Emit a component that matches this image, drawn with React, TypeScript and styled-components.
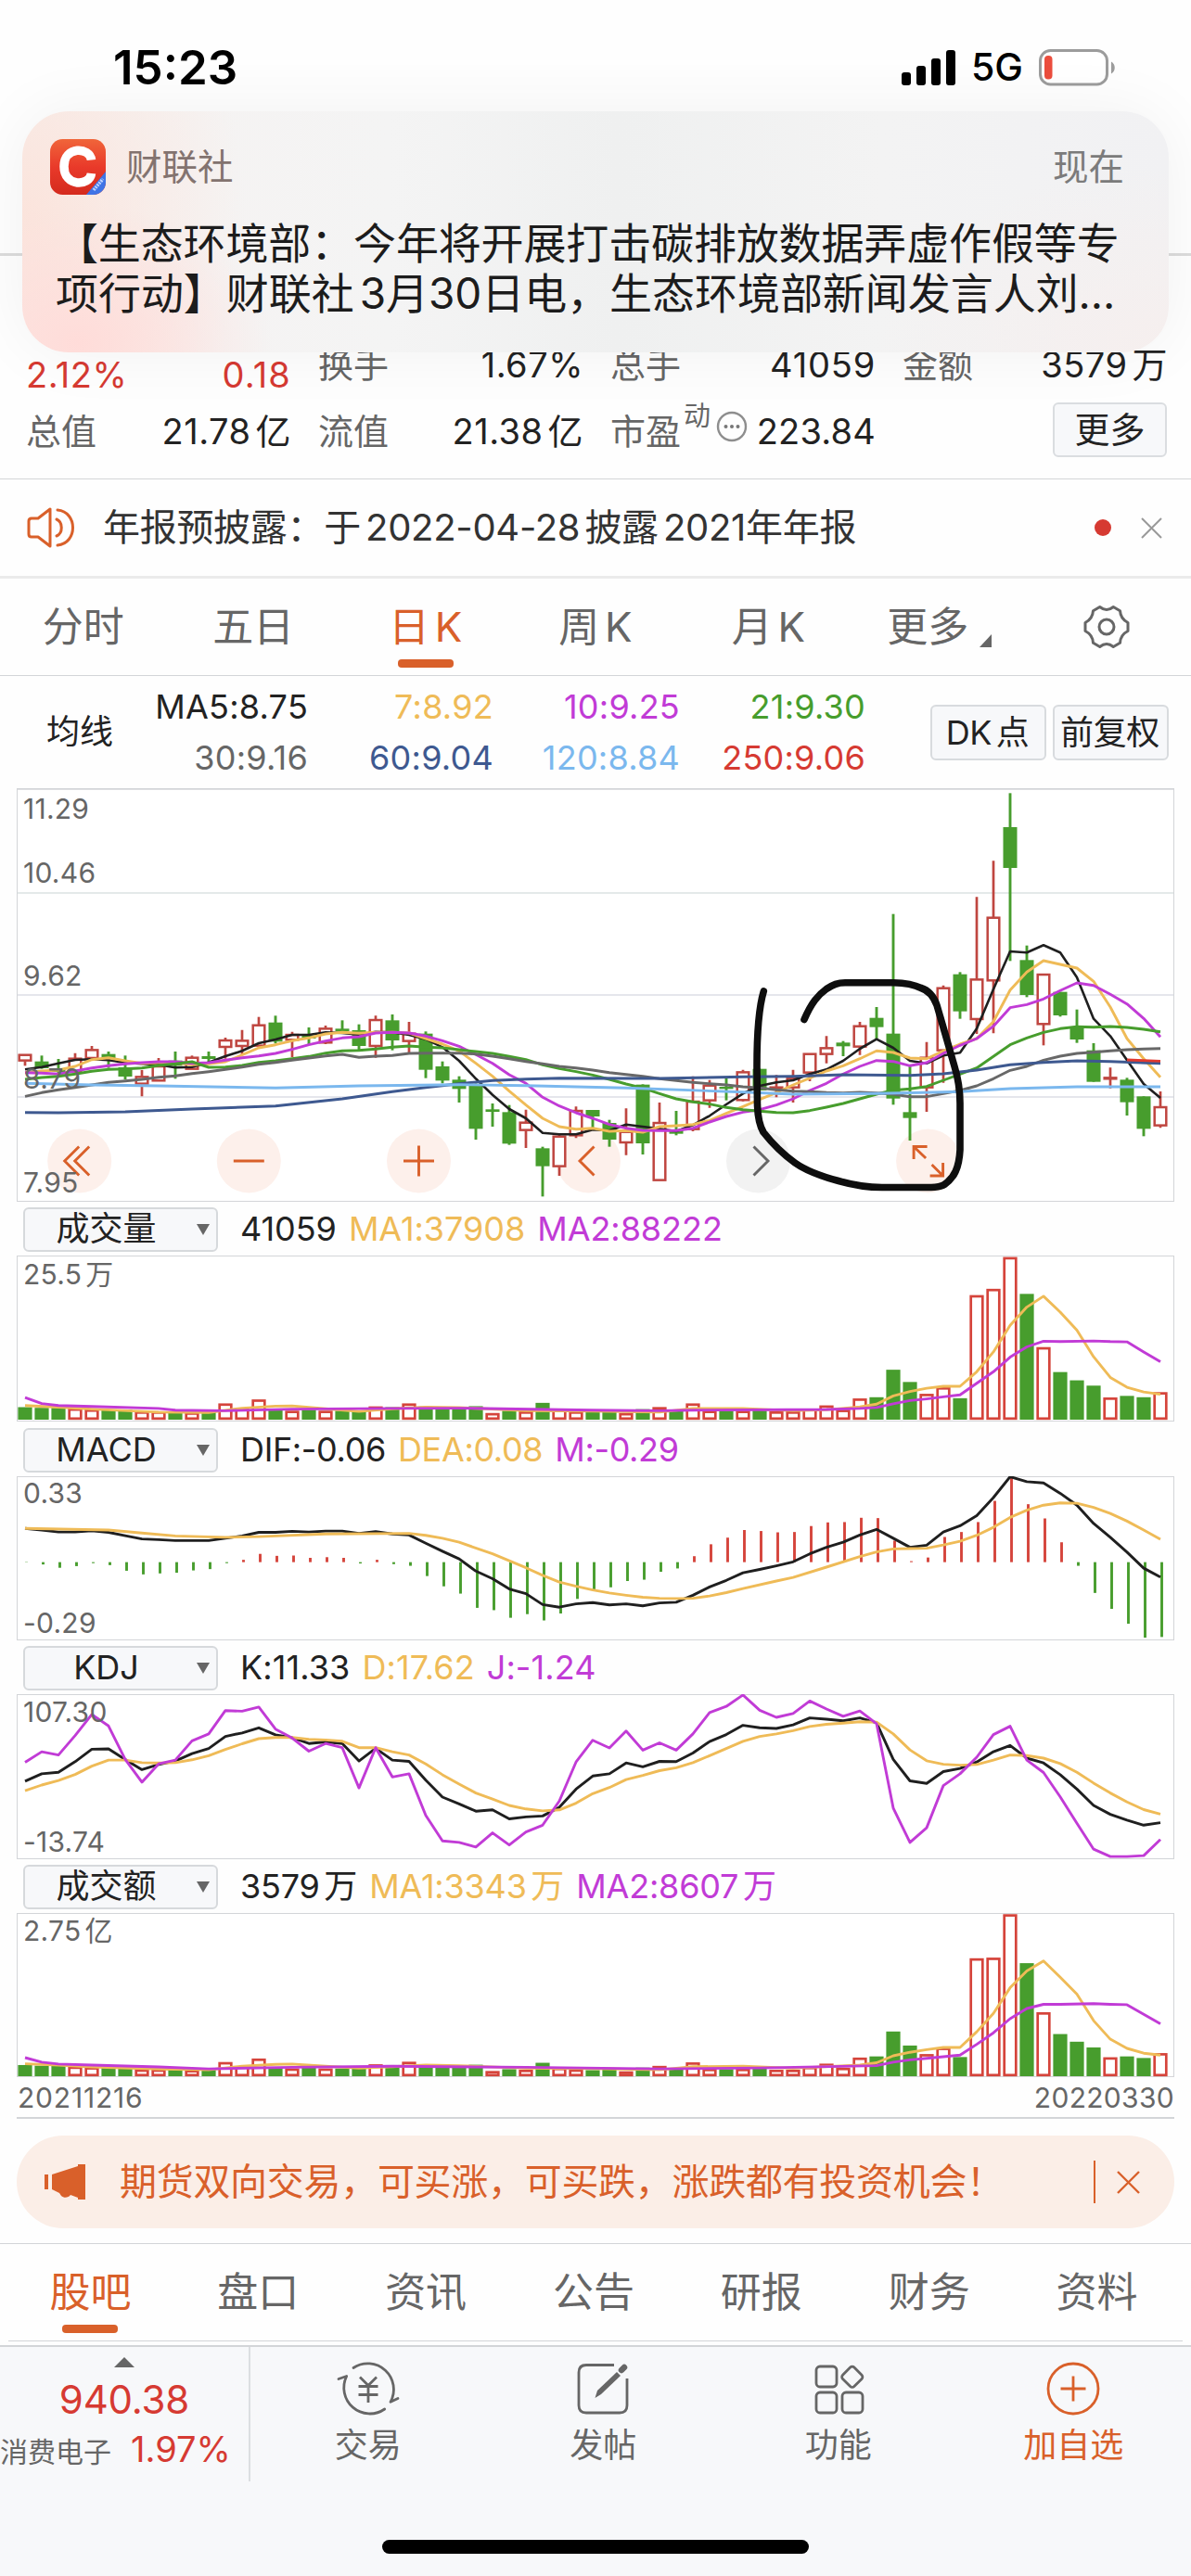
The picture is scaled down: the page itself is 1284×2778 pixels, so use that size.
import React from "react";
import styled, { createGlobalStyle } from "styled-components";

const C = {
  ink: "#222222",
  text: "#333333",
  gray: "#666666",
  line: "#d3d5d8",
  orange: "#d9602a",
  red: "#d63a32",
  candle: "#bf4640",
  bar: "#d5443b",
  green: "#479d2d",
  yellow: "#efbb57",
  magenta: "#c13bd6",
  navy: "#3e5990",
  sky: "#7bb8ee",
  panel: "#f7f8fa",
};

const Global = createGlobalStyle`
  * { box-sizing: border-box; }
  html, body { margin: 0; padding: 0; background: #fff; }
  body {
    font-family: Inter, "Noto Sans CJK SC", "Noto Sans", sans-serif;
    line-height: 1.2;
    color: ${C.text};
  }
  svg { display: block; }
`;

const Page = styled.main`
  position: relative;
  width: 1284px;
  height: 2778px;
  overflow: hidden;
  display: flex;
  flex-direction: column;
  background: #fefefe;
`;

/* Latin runs next to Han characters get a small gap on each side. */
const Gap = styled.span`
  display: inline-block;
  width: 0.13em;
`;

function Mixed({ children }: { children: string }) {
  const parts = children.split(/(?<=[\u4e00-\u9fff])(?=[0-9A-Za-z])|(?<=[0-9A-Za-z])(?=[\u4e00-\u9fff])/);
  return (
    <>
      {parts.map((p, i) => (
        <React.Fragment key={i}>
          {i > 0 && <Gap />}
          {p}
        </React.Fragment>
      ))}
    </>
  );
}

/* ---------- status bar ---------- */
const StatusBar = styled.header`
  height: 120px;
  padding: 25px 82px 0 122px;
  display: flex;
  align-items: center;
  justify-content: space-between;
  color: #000;
`;
const Clock = styled.div`
  font-size: 51px;
  font-weight: 600;
  letter-spacing: 0;
`;
const StatusRight = styled.div`
  display: flex;
  align-items: center;
`;
const Carrier = styled.span`
  font-size: 41px;
  font-weight: 500;
  margin: 0 17px 0 16px;
`;

/* ---------- push notification ---------- */
const Push = styled.section`
  position: absolute;
  left: 24px;
  top: 120px;
  width: 1236px;
  height: 260px;
  border-radius: 50px;
  padding: 30px 48px 0 30px;
  background:
    radial-gradient(ellipse 210px 150px at 60px 250px, #ffdcd9 0%, rgba(255, 220, 217, 0) 100%),
    radial-gradient(ellipse 240px 330px at 0px 110px, #fbe4dc 0%, rgba(251, 228, 220, 0) 100%),
    radial-gradient(ellipse 320px 200px at 1236px 260px, #f6efee 0%, rgba(246, 239, 238, 0) 100%),
    linear-gradient(90deg, #f6f2f1 0%, #f4f4f4 32%, #eff0f0 52%, #f3f3f3 75%, #f1f1f3 100%);
  box-shadow: 0 0 70px rgba(0, 0, 0, 0.055);
`;
const PushHead = styled.div`
  height: 60px;
  display: flex;
  align-items: center;
  font-size: 38.5px;
`;
const AppName = styled.span`
  flex: 1;
  margin-left: 22px;
  color: #83736f;
`;
const When = styled.span`
  color: #7b7b7b;
`;
const PushBody = styled.p`
  margin: 25px 0 0 6px;
  font-size: 46px;
  line-height: 54px;
  color: #1c1c1c;
  white-space: nowrap;
`;
const PushLine = styled.span<{ $ls: number }>`
  display: block;
  letter-spacing: ${(p) => p.$ls}px;
`;

/* ---------- quote ---------- */
const TitleArea = styled.div`
  height: 156px;
  border-bottom: 3px solid #dcdcdc;
`;
const Quote = styled.section`
  height: 241px;
  border-bottom: 1px solid ${C.line};
  padding: 82px 26px 0 28px;
  display: grid;
  grid-template-columns: repeat(4, 285px);
  grid-auto-rows: 72px;
  column-gap: 30px;
  font-size: 38px;
`;
const Cell = styled.div<{ $drop?: number }>`
  display: flex;
  align-items: center;
  justify-content: space-between;
  white-space: nowrap;
  padding-top: ${(p) => p.$drop ?? 0}px;
`;
const Label = styled.span`
  color: ${C.gray};
`;
const Value = styled.span<{ $c?: string; $ls?: number }>`
  color: ${(p) => p.$c ?? C.ink};
  letter-spacing: ${(p) => p.$ls ?? 0.5}px;
  margin-right: -1px;
`;
const Pe = styled.span`
  display: flex;
  align-items: center;
  color: ${C.gray};
  svg { margin-top: -13px; }
`;
const Sup = styled.sup`
  font-size: 29px;
  line-height: 30px;
  margin: -34px 6px 0 3px;
`;
const MoreButton = styled.button`
  width: 123px;
  height: 59px;
  margin: -6px 0 0 auto;
  padding: 0;
  border: 2px solid #dadde0;
  border-radius: 6px;
  background: ${C.panel};
  font: inherit;
  line-height: 54px;
  color: ${C.ink};
`;

/* ---------- announcement ---------- */
const Notice = styled.section`
  height: 107px;
  border-bottom: 3px solid #ebebeb;
  padding: 0 31px 0 29px;
  display: flex;
  align-items: center;
  font-size: 40px;
`;
const NoticeText = styled.span`
  flex: 1;
  margin-left: 29px;
  letter-spacing: -0.3px;
`;
const Dot = styled.i`
  width: 18px;
  height: 18px;
  border-radius: 50%;
  background: ${C.red};
  margin-right: 32px;
`;

/* ---------- tabs ---------- */
const Tabs = styled.nav<{ $h: number; $pad?: string }>`
  height: ${(p) => p.$h}px;
  display: grid;
  grid-template-columns: repeat(7, 1fr);
  padding: ${(p) => p.$pad ?? "0"};
  font-size: 44px;
`;
const Tab = styled.a<{ $on?: boolean; $shift?: number }>`
  position: relative;
  display: flex;
  align-items: center;
  justify-content: center;
  color: ${(p) => (p.$on ? C.orange : C.gray)};
  transform: translateX(${(p) => p.$shift ?? 0}px);
  &::after {
    content: "";
    display: ${(p) => (p.$on ? "block" : "none")};
    position: absolute;
    left: 50%;
    margin-left: -30px;
    bottom: 8px;
    width: 60px;
    height: 9px;
    border-radius: 4px;
    background: ${C.orange};
  }
`;
const Corner = styled.svg`
  margin: 30px 0 0 12px;
`;
const Rule = styled.div<{ $w?: number; $inset?: number; $gap?: number }>`
  flex: none;
  height: ${(p) => p.$w ?? 1}px;
  margin: 0 ${(p) => p.$inset ?? 0}px ${(p) => p.$gap ?? 0}px;
  background: ${C.line};
`;

/* ---------- moving averages ---------- */
const MaBar = styled.section`
  height: 121px;
  display: flex;
  align-items: center;
  padding: 0 24px 0 50px;
  font-size: 36px;
  color: ${C.ink};
`;
const MaGrid = styled.div`
  display: grid;
  grid-template-columns: 210px 200px 201px 200px;
  grid-auto-rows: 55px;
  align-items: center;
  justify-items: end;
  margin-right: auto;
  padding-top: 1px;
`;
const Ma = styled.span<{ $c: string }>`
  color: ${(p) => p.$c};
  letter-spacing: 0.25px;
`;
const SmallButton = styled.button`
  width: 125px;
  height: 60px;
  margin-left: 7px;
  padding: 0 2px 0 0;
  border: 2px solid #d8dbde;
  border-radius: 6px;
  background: ${C.panel};
  font: inherit;
  letter-spacing: -0.4px;
  line-height: 54px;
  color: ${C.ink};
  white-space: nowrap;
`;

/* ---------- indicator header ---------- */
const Indicator = styled.div<{ $h: number }>`
  height: ${(p) => p.$h}px;
  padding: 2px 0 0 25px;
  display: flex;
  align-items: center;
  font-size: 36px;
`;
const Select = styled.button`
  width: 210px;
  height: 48px;
  padding: 0 7px 0 0;
  margin-right: 24px;
  display: flex;
  align-items: center;
  border: 2px solid #d6d9dc;
  border-radius: 6px;
  background: ${C.panel};
  font: inherit;
  color: ${C.ink};
`;
const SelectName = styled.span`
  flex: 1;
  text-align: center;
  padding-right: 10px;
`;
const Readout = styled.span<{ $c: string; $ls: number }>`
  color: ${(p) => p.$c};
  margin-right: 13px;
  letter-spacing: ${(p) => p.$ls}px;
`;
const Dates = styled.div`
  height: 43px;
  padding: 0 18px 0 19px;
  display: flex;
  justify-content: space-between;
  align-items: center;
  font-size: 30px;
  color: ${C.gray};
`;
const DateLabel = styled.span<{ $ls: number }>`
  letter-spacing: ${(p) => p.$ls}px;
`;

/* ---------- promo ---------- */
const Promo = styled.aside`
  height: 100px;
  margin: 18px 18px 16px;
  padding: 0 37px 0 29px;
  border-radius: 50px;
  background: #fbeee7;
  display: flex;
  align-items: center;
  font-size: 40px;
  color: ${C.orange};
`;
const PromoText = styled.span`
  flex: 1;
  margin-left: 34px;
  letter-spacing: -0.3px;
  white-space: nowrap;
`;
const Bar = styled.i`
  width: 2px;
  height: 46px;
  background: ${C.orange};
  margin-right: 23px;
`;

/* ---------- bottom bar ---------- */
const Bottom = styled.footer`
  flex: 1;
  background: ${C.panel};
  display: flex;
  flex-direction: column;
`;
const BottomRow = styled.div`
  height: 145px;
  display: flex;
`;
const Board = styled.div`
  width: 270px;
  border-right: 2px solid #dcdee1;
  display: flex;
  flex-direction: column;
  align-items: center;
  padding-top: 11px;
`;
const BoardIndex = styled.div`
  font-size: 42px;
  line-height: 50px;
  margin-top: 10px;
  letter-spacing: -0.2px;
  color: ${C.red};
`;
const BoardRow = styled.div`
  align-self: stretch;
  display: flex;
  align-items: baseline;
  margin-top: 6px;
  height: 46px;
  font-size: 30px;
  color: ${C.gray};
  white-space: nowrap;
`;
const BoardPct = styled.span`
  margin-left: 21px;
  font-size: 38px;
  color: ${C.red};
`;
const Action = styled.a<{ $on?: boolean }>`
  flex: 1;
  display: flex;
  flex-direction: column;
  align-items: center;
  padding-top: 13px;
  font-size: 36px;
  line-height: 50px;
  color: ${(p) => (p.$on ? C.orange : C.gray)};
  svg { margin-bottom: 4px; }
`;
const HomeBar = styled.div`
  width: 460px;
  height: 15px;
  margin: 63px auto 0;
  border-radius: 8px;
  background: #000;
`;

/* ---------- chart data (panel pixels, one entry per trading day) ---------- */
type Candle = [string, number, number, number, number];
// colour, body top, body bottom, wick top, wick bottom
const candles: Candle[] = [
  ["r", 891, 913, 891, 928], ["g", 914, 936, 895, 938], ["g", 936, 948, 906, 960], ["r", 903, 948, 887, 955],
  ["r", 875, 905, 864, 912], ["g", 890, 903, 882, 935], ["g", 933, 963, 895, 972], ["r", 962, 988, 942, 1027],
  ["r", 928, 978, 903, 978], ["g", 911, 928, 882, 970], ["r", 900, 940, 895, 940], ["g", 897, 906, 882, 915],
  ["r", 844, 869, 837, 905], ["r", 845, 866, 812, 893], ["r", 795, 865, 770, 865], ["g", 788, 850, 766, 856],
  ["r", 826, 846, 818, 900], ["g", 830, 840, 804, 860], ["r", 806, 855, 798, 858], ["g", 808, 816, 781, 820],
  ["g", 813, 864, 794, 880], ["r", 778, 866, 766, 902], ["g", 781, 846, 762, 878], ["r", 822, 850, 786, 885],
  ["g", 824, 941, 817, 968], ["g", 930, 976, 914, 985], ["g", 973, 1003, 962, 1047], ["g", 990, 1132, 985, 1167],
  ["g", 1069, 1077, 1050, 1125], ["g", 1078, 1180, 1055, 1184], ["r", 1110, 1138, 1070, 1194], ["g", 1195, 1253, 1190, 1351],
  ["r", 1155, 1255, 1150, 1284], ["r", 1072, 1155, 1060, 1162], ["g", 1071, 1092, 1071, 1135], ["g", 1113, 1167, 1103, 1190],
  ["r", 1140, 1178, 1066, 1217], ["g", 989, 1179, 988, 1215], ["r", 1111, 1300, 1047, 1300], ["g", 1135, 1148, 1074, 1153],
  ["r", 1042, 1135, 962, 1140], ["r", 990, 1042, 974, 1064], ["g", 996, 1003, 968, 1040], ["r", 947, 1041, 941, 1043],
  ["g", 938, 1008, 938, 1008], ["r", 996, 1003, 958, 1030], ["r", 967, 1000, 941, 1047], ["r", 888, 952, 888, 978],
  ["r", 869, 892, 832, 920], ["g", 853, 865, 848, 897], ["r", 798, 868, 786, 893], ["g", 773, 803, 738, 845],
  ["g", 824, 1034, 437, 1054], ["g", 1078, 1097, 930, 1170], ["r", 900, 1000, 851, 1077], ["r", 675, 880, 668, 983],
  ["g", 632, 752, 625, 776], ["r", 647, 779, 382, 825], ["r", 447, 654, 265, 823], ["g", 156, 288, 46, 589],
  ["g", 586, 699, 539, 706], ["r", 631, 795, 631, 862], ["g", 689, 765, 689, 769], ["g", 802, 843, 746, 854],
  ["g", 878, 980, 855, 980], ["r", 965, 972, 934, 1001], ["g", 973, 1046, 967, 1089], ["g", 1027, 1132, 1027, 1156],
  ["r", 1060, 1123, 1011, 1129],
];

const ma5 = [940, 932, 920, 909, 907, 910, 918, 922, 925, 934, 932, 917, 897, 880, 855, 843, 828, 828, 820, 822, 827, 818, 820, 828, 842, 868, 912, 970, 1022, 1068, 1098, 1145, 1150, 1150, 1135, 1138, 1118, 1125, 1132, 1140, 1120, 1090, 1053, 1018, 993, 982, 975, 955, 940, 912, 873, 842, 870, 912, 920, 895, 886, 808, 680, 558, 562, 538, 562, 642, 776, 832, 910, 987, 1032];
const ma7 = [950, 945, 942, 930, 908, 902, 912, 920, 918, 918, 925, 922, 915, 893, 870, 860, 847, 838, 825, 820, 823, 820, 820, 822, 840, 858, 880, 920, 962, 1010, 1055, 1098, 1125, 1133, 1130, 1140, 1138, 1143, 1125, 1122, 1118, 1105, 1082, 1060, 1037, 1015, 990, 968, 945, 928, 905, 880, 885, 903, 905, 880, 858, 840, 785, 683, 625, 588, 600, 612, 655, 738, 840, 905, 965];
const ma10 = [950, 952, 955, 945, 935, 928, 922, 918, 915, 915, 920, 918, 910, 902, 896, 888, 875, 860, 848, 838, 834, 822, 820, 822, 832, 847, 865, 892, 920, 957, 985, 1030, 1058, 1080, 1098, 1118, 1130, 1137, 1138, 1138, 1130, 1110, 1092, 1078, 1070, 1055, 1035, 1008, 985, 955, 930, 911, 914, 928, 918, 888, 862, 840, 800, 740, 730, 712, 685, 660, 668, 697, 728, 775, 835];
const ma21 = [972, 966, 962, 955, 946, 940, 938, 935, 927, 922, 915, 933, 932, 927, 917, 912, 905, 898, 887, 880, 878, 874, 868, 864, 868, 870, 876, 882, 888, 898, 908, 925, 937, 947, 958, 972, 987, 1000, 1018, 1035, 1045, 1052, 1063, 1070, 1075, 1079, 1080, 1073, 1062, 1050, 1035, 1020, 1007, 1003, 995, 975, 955, 935, 898, 860, 838, 820, 808, 802, 803, 801, 804, 810, 818];
const ma30 = [1027, 1015, 1006, 998, 990, 982, 977, 972, 965, 961, 953, 947, 940, 932, 923, 917, 910, 903, 896, 891, 901, 897, 895, 888, 887, 887, 887, 890, 897, 905, 914, 922, 930, 935, 942, 950, 956, 962, 970, 976, 982, 986, 990, 996, 1000, 1006, 1010, 1012, 1015, 1016, 1014, 1016, 1020, 1028, 1028, 1018, 1008, 993, 970, 943, 930, 910, 897, 888, 884, 880, 876, 874, 872];

type Key = [number, number];
const ma60: Key[] = [[0, 1079], [2, 1080], [6, 1077], [10, 1068], [15, 1058], [19, 1035], [22, 1012], [24, 998], [26, 986], [28, 976], [30, 971], [32, 968], [38, 969], [43, 964], [46, 962], [49, 957], [53, 959], [55, 954], [57, 942], [59, 925], [61, 917], [63, 912], [65, 914], [68, 920]];
const ma120: Key[] = [[0, 985], [4, 990], [8, 993], [15, 1000], [20, 993], [26, 989], [30, 992], [36, 1000], [43, 1013], [46, 1020], [51, 1018], [56, 1012], [59, 1002], [63, 996], [68, 996]];
const ma250: Key[] = [[66, 910], [68, 914]];

const reds = new Set([3, 4, 7, 8, 10, 12, 13, 14, 16, 18, 21, 23, 28, 30, 32, 33, 36, 38, 40, 41, 43, 45, 46, 47, 48, 49, 50, 54, 55, 57, 58, 59, 61, 65, 68]);
const volume = [637, 639, 639, 641, 644, 645, 645, 650, 650, 652, 653, 652, 626, 641, 614, 645, 648, 645, 648, 648, 648, 635, 637, 626, 635, 643, 643, 634, 655, 648, 650, 624, 645, 650, 652, 650, 655, 643, 637, 648, 626, 648, 648, 648, 645, 650, 650, 642, 632, 645, 611, 607, 524, 561, 597, 577, 610, 299, 280, 184, 295, 456, 531, 556, 572, 608, 603, 607, 592];
const volMa1: Key[] = [[0, 632], [2, 637], [4, 643], [8, 652], [11, 653], [13, 640], [15, 634], [16, 633], [18, 642], [20, 650], [22, 642], [24, 637], [26, 638], [30, 648], [34, 649], [38, 652], [40, 641], [43, 641], [46, 648], [48, 645], [50, 636], [51, 628], [52, 603], [53, 590], [54, 580], [55, 574], [56, 574], [57, 530], [58, 470], [59, 390], [60, 335], [61, 302], [62, 350], [63, 405], [64, 485], [65, 547], [66, 577], [67, 591], [68, 598]];
const volMa2: Key[] = [[0, 608], [1, 626], [2, 632], [4, 635], [8, 641], [9, 646], [12, 648], [16, 643], [22, 641], [26, 640], [34, 646], [38, 648], [40, 646], [48, 644], [50, 641], [51, 638], [52, 627], [53, 617], [54, 612], [55, 606], [56, 600], [57, 565], [58, 530], [59, 486], [60, 455], [61, 438], [62, 439], [64, 437], [65, 439], [66, 440], [67, 470], [68, 500]];

const hist = [1106, 1112, 1122, 1117, 1108, 1114, 1131, 1142, 1139, 1137, 1130, 1126, 1108, 1098, 1080, 1086, 1085, 1092, 1090, 1092, 1109, 1098, 1111, 1116, 1147, 1178, 1200, 1243, 1250, 1273, 1262, 1281, 1260, 1216, 1190, 1181, 1162, 1158, 1134, 1124, 1087, 1051, 1031, 1008, 1011, 1015, 1014, 996, 985, 984, 971, 972, 1040, 1102, 1091, 1029, 1014, 984, 920, 850, 930, 973, 1045, 1116, 1198, 1246, 1291, 1333, 1331];
const dif = [1003, 1008, 1014, 1014, 1010, 1015, 1025, 1035, 1037, 1040, 1040, 1040, 1033, 1026, 1015, 1015, 1012, 1014, 1011, 1011, 1018, 1013, 1020, 1023, 1048, 1072, 1095, 1132, 1155, 1186, 1200, 1233, 1241, 1231, 1227, 1234, 1231, 1237, 1228, 1226, 1205, 1180, 1160, 1137, 1127, 1116, 1104, 1080, 1060, 1045, 1023, 1006, 1033, 1060, 1054, 1014, 995, 965, 910, 847, 862, 866, 897, 933, 988, 1030, 1075, 1123, 1150];
const dea: Key[] = [[0, 1003], [5, 1008], [7, 1017], [9, 1026], [12, 1030], [14, 1028], [18, 1020], [23, 1018], [24, 1024], [25, 1033], [26, 1045], [28, 1080], [30, 1122], [31, 1145], [32, 1165], [33, 1178], [34, 1189], [35, 1198], [36, 1205], [37, 1211], [38, 1214], [39, 1215], [40, 1214], [41, 1207], [42, 1197], [43, 1185], [45, 1162], [46, 1151], [48, 1120], [50, 1088], [51, 1074], [52, 1065], [53, 1064], [54, 1063], [55, 1053], [56, 1042], [57, 1024], [58, 1000], [59, 970], [60, 948], [61, 933], [62, 926], [63, 927], [64, 940], [65, 958], [66, 981], [67, 1008], [68, 1036]];

const kLine = [438, 415, 410, 377, 338, 337, 370, 402, 386, 375, 352, 336, 298, 287, 271, 293, 302, 320, 315, 320, 375, 335, 372, 376, 435, 488, 509, 532, 528, 556, 550, 547, 520, 463, 422, 415, 381, 393, 376, 377, 350, 314, 292, 263, 271, 273, 262, 240, 244, 249, 240, 255, 370, 437, 445, 408, 398, 378, 346, 326, 366, 381, 418, 463, 514, 542, 560, 576, 568];
const dLine = [468, 450, 436, 417, 391, 372, 372, 380, 381, 380, 371, 358, 339, 321, 305, 301, 301, 307, 309, 313, 333, 333, 346, 356, 384, 418, 447, 475, 494, 514, 525, 531, 528, 507, 477, 458, 433, 420, 405, 396, 380, 358, 336, 313, 298, 290, 280, 267, 260, 256, 252, 253, 290, 340, 374, 385, 388, 386, 372, 356, 358, 366, 383, 410, 444, 475, 503, 527, 541];
const jLine = [379, 346, 356, 295, 229, 265, 370, 441, 384, 372, 312, 290, 217, 219, 206, 275, 303, 344, 320, 333, 459, 333, 425, 415, 545, 625, 630, 644, 600, 638, 597, 576, 500, 378, 310, 334, 281, 341, 318, 341, 290, 223, 204, 168, 216, 238, 226, 187, 212, 235, 218, 258, 522, 630, 584, 452, 415, 363, 292, 266, 372, 411, 487, 570, 651, 674, 674, 671, 621];

const amount = [1327, 1329, 1329, 1332, 1334, 1335, 1335, 1341, 1341, 1342, 1343, 1342, 1318, 1331, 1307, 1337, 1338, 1335, 1338, 1338, 1338, 1325, 1327, 1317, 1329, 1334, 1334, 1326, 1346, 1340, 1342, 1320, 1336, 1341, 1343, 1341, 1347, 1335, 1330, 1339, 1319, 1339, 1340, 1339, 1337, 1342, 1342, 1333, 1323, 1336, 1304, 1300, 1222, 1266, 1293, 1273, 1302, 993, 991, 855, 1008, 1162, 1230, 1254, 1272, 1303, 1300, 1305, 1290];
const amtMa1: Key[] = [[0, 1323], [2, 1327], [4, 1333], [8, 1340], [11, 1342], [13, 1331], [15, 1325], [16, 1324], [18, 1331], [20, 1337], [22, 1332], [24, 1327], [26, 1329], [30, 1337], [34, 1338], [38, 1342], [40, 1332], [43, 1331], [46, 1337], [50, 1327], [51, 1320], [52, 1298], [53, 1287], [54, 1279], [55, 1272], [56, 1272], [57, 1223], [58, 1165], [59, 1085], [60, 1032], [61, 1001], [62, 1052], [63, 1105], [64, 1188], [65, 1246], [66, 1275], [67, 1290], [68, 1296]];
const amtMa2: Key[] = [[0, 1304], [1, 1318], [2, 1324], [4, 1327], [8, 1333], [11, 1339], [16, 1334], [22, 1331], [30, 1334], [38, 1339], [44, 1336], [51, 1329], [52, 1318], [53, 1311], [54, 1306], [55, 1301], [56, 1296], [57, 1262], [58, 1226], [59, 1182], [60, 1150], [61, 1137], [62, 1137], [64, 1135], [65, 1137], [66, 1138], [67, 1168], [68, 1198]];

const px = (i: number) => 27 + 18 * i;
const priceY = (v: number) => 840 + v / 3;
const midY = (v: number) => 1290 + v / 2.8;
const lowY = (v: number) => 1770 + v / 2.904;

interface LineProps {
  data: number[] | Key[];
  y: (v: number) => number;
  c: string;
  w?: number;
}
function Line({ data, y, c, w = 2.9 }: LineProps) {
  const keys: Key[] = (data as (number | Key)[]).map((d, i) => (Array.isArray(d) ? d : [i, d]) as Key);
  return (
    <polyline
      points={keys.map(([i, v]) => `${px(i)},${y(v).toFixed(1)}`).join(" ")}
      fill="none"
      stroke={c}
      strokeWidth={w}
      strokeLinejoin="round"
    />
  );
}

function Bars({ data, y, base }: { data: number[]; y: (v: number) => number; base: number }) {
  return (
    <g>
      {data.map((v, i) => {
        const top = y(v);
        return reds.has(i) ? (
          <rect key={i} x={px(i) - 6.3} y={top + 1.2} width={12.6} height={Math.max(base - top - 2.4, 1)} fill="#fff" stroke={C.bar} strokeWidth={2.7} />
        ) : (
          <rect key={i} x={px(i) - 7.6} y={top} width={15.2} height={base - top} fill={C.green} />
        );
      })}
    </g>
  );
}

const Panel = styled.svg`
  flex: none;
  text {
    font-family: Inter, "Noto Sans CJK SC", sans-serif;
    font-size: 30px;
    letter-spacing: 0.25px;
    fill: ${C.gray};
  }
`;

function Chart({ top, height, children }: { top: number; height: number; children: React.ReactNode }) {
  return (
    <Panel width={1284} height={height} viewBox={`0 ${top} 1284 ${height}`}>
      <rect x={18.5} y={top + 0.5} width={1247} height={height - 1} fill="#fff" stroke={C.line} />
      {children}
    </Panel>
  );
}

const Round = ({ x, gray, children }: { x: number; gray?: boolean; children: React.ReactNode }) => (
  <g transform={`translate(${x} 1252)`} fill="none" stroke={gray ? C.gray : C.orange} strokeWidth={2.9}>
    <circle r={34.5} fill={gray ? "#f2f2f2" : "#fdf0eb"} stroke="none" />
    {children}
  </g>
);

function PriceChart() {
  return (
    <Chart top={850} height={446}>
      <path d="M18 850.8H1266" stroke={C.line} strokeWidth={2} />
      <path d="M19 963H1265" stroke="#e4e9e9" strokeWidth={2} />
      <path d="M19 1073H1265M19 1183H1265" stroke="#e5e6ec" strokeWidth={2} />
      <Round x={85.7}><path d="M-.5-15.5-16 0l15.5 15.5M10.5-15.5-5 0l15.5 15.5" /></Round>
      <Round x={268.3}><path d="M-16.5 0h33" /></Round>
      <Round x={451.5}><path d="M-16.5 0h33M0-16.5v33" /></Round>
      <Round x={634.5}><path d="M6-15.5-9.5 0 6 15.5" /></Round>
      <Round x={817.5} gray><path d="M-5-15.5 10.5 0-5 15.5" /></Round>
      <Round x={1000.6}>
        <path d="M-1-15.500H-15.500V-2M-15-15-2.500-3M16 2v14H2M15.500 15.500 4 4" />
      </Round>
      {candles.map(([k, a, b, h, l], i) => {
        const red = k === "r";
        const c = red ? C.candle : C.green;
        const x = px(i);
        const top = priceY(a);
        const hgt = (b - a) / 3;
        return (
          <g key={i}>
            {red ? (
              <>
                <path d={`M${x} ${priceY(h)}V${top}M${x} ${priceY(b)}V${priceY(l)}`} stroke={c} strokeWidth={2.7} />
                <rect x={x - 6.3} y={top + 0.7} width={12.6} height={Math.max(hgt - 1.4, 0.5)} fill={hgt > 3 ? "#fff" : c} stroke={c} strokeWidth={2.5} />
              </>
            ) : (
              <>
                <path d={`M${x} ${priceY(h)}V${priceY(l)}`} stroke={c} strokeWidth={2.9} />
                <rect x={x - 7.5} y={top} width={15} height={hgt} fill={c} />
              </>
            )}
          </g>
        );
      })}
      <Line data={ma5} y={priceY} c="#1f1f1f" w={2.6} />
      <Line data={ma7} y={priceY} c={C.yellow} />
      <Line data={ma10} y={priceY} c={C.magenta} />
      <Line data={ma21} y={priceY} c={C.green} />
      <Line data={ma30} y={priceY} c="#686868" />
      <Line data={ma60} y={priceY} c={C.navy} />
      <Line data={ma120} y={priceY} c={C.sky} />
      <Line data={ma250} y={priceY} c="#e0392f" w={3.5} />
      <path d="M1215 1145.5 1251 1146.8" stroke={C.navy} strokeWidth={2} />
      <text x={25} y={883}>11.29</text>
      <text x={25} y={952}>10.46</text>
      <text x={25} y={1063}>9.62</text>
      <text x={25} y={1174}>8.79</text>
      <text x={25} y={1286}>7.95</text>
      <path
        d="M823.3 1069C817 1090 816 1120 816 1150L816.5 1192C817 1205 819 1214 823 1221C834 1235 846 1246 857 1254C871 1264 887 1269 904 1273.5C920 1278 936 1280.5 951 1280.5H1004C1010 1280.5 1014 1280 1018 1277.5C1029 1270 1034 1259 1035 1240V1190C1035 1175 1033 1163 1029 1150L1019 1115L1010 1084C1006 1073 1001 1068 993 1065.5C984 1061 974 1060 963 1059.7H912C903 1059.5 898 1062 891 1066.5C882 1073 875 1081 867 1099.5"
        fill="none"
        stroke="#0e0e0e"
        strokeWidth={7.6}
        strokeLinecap="round"
        strokeLinejoin="round"
      />
    </Chart>
  );
}

interface HeadProps {
  h: number;
  name: string;
  items: string[];
  ls: number;
}
function IndicatorHead({ h, name, items, ls }: HeadProps) {
  const colors = [C.ink, C.yellow, C.magenta];
  return (
    <Indicator $h={h}>
      <Select>
        <SelectName>{name}</SelectName>
        <svg width={14} height={12} viewBox="0 0 14 12"><path d="M0 0h14L7 12z" fill={C.gray} /></svg>
      </Select>
      {items.map((t, i) => (
        <Readout key={t} $c={colors[i]} $ls={ls}><Mixed>{t}</Mixed></Readout>
      ))}
    </Indicator>
  );
}

const Cross = ({ size, c, w = 2 }: { size: number; c: string; w?: number }) => (
  <svg width={size} height={size} viewBox={`0 0 ${size} ${size}`}>
    <path d={`M1 1L${size - 1} ${size - 1}M${size - 1} 1L1 ${size - 1}`} stroke={c} strokeWidth={w} />
  </svg>
);

export default function App() {
  return (
    <Page>
      <Global />
      <StatusBar>
        <Clock>15:23</Clock>
        <StatusRight>
          <svg width={59} height={38} viewBox="0 0 59 38">
            <rect x={0} y={24} width={10} height={14} rx={3} />
            <rect x={16} y={17} width={10} height={21} rx={3} />
            <rect x={32} y={9} width={10} height={29} rx={3} />
            <rect x={48} y={0} width={10} height={38} rx={3} />
          </svg>
          <Carrier>5G</Carrier>
          <svg width={82} height={40} viewBox="0 0 82 40">
            <rect x={1.5} y={1.5} width={72} height={36.5} rx={11} fill="#fff" stroke="#9c9c9c" strokeWidth={3} />
            <rect x={6} y={7} width={8.5} height={25.5} rx={4} fill="#eb4d3d" />
            <path d="M78 13.5c5 2.5 5 10.5 0 13z" fill="#9c9c9c" />
          </svg>
        </StatusRight>
      </StatusBar>

      <TitleArea />

      <Quote>
        <Cell $drop={22}><Value $c={C.red}>2.12%</Value><Value $c={C.red} $ls={1.2}>0.18</Value></Cell>
        <Cell><Label>换手</Label><Value>1.67%</Value></Cell>
        <Cell><Label>总手</Label><Value $ls={0.8}>41059</Value></Cell>
        <Cell><Label>金额</Label><Value><Mixed>3579万</Mixed></Value></Cell>
        <Cell><Label>总值</Label><Value><Mixed>21.78亿</Mixed></Value></Cell>
        <Cell><Label>流值</Label><Value><Mixed>21.38亿</Mixed></Value></Cell>
        <Cell>
          <Pe>
            市盈<Sup>动</Sup>
            <svg width={34} height={34} viewBox="0 0 34 34">
              <circle cx={17} cy={17} r={15} fill="none" stroke="#8e8e8e" strokeWidth={2.4} />
              <circle cx={10.5} cy={17} r={2} fill="#777" />
              <circle cx={17} cy={17} r={2} fill="#777" />
              <circle cx={23.5} cy={17} r={2} fill="#777" />
            </svg>
          </Pe>
          <Value $ls={0.2}>223.84</Value>
        </Cell>
        <Cell><MoreButton>更多</MoreButton></Cell>
      </Quote>

      <Notice>
        <svg width={53} height={46} viewBox="0 0 53 46" fill="none" stroke={C.orange} strokeWidth={3} strokeLinejoin="round">
          <path d="M25 3v40L12 33H5q-3 0-3-3V16q0-3 3-3h7z" />
          <path d="M32 14c7 3 7 15 0 18M33 4c22 2 22 36 0 38" strokeLinecap="round" />
        </svg>
        <NoticeText>年报预披露：于<Gap />2022-04-28<Gap />披露<Gap />2021年年报</NoticeText>
        <Dot />
        <Cross size={23} c="#999" />
      </Notice>

      <Tabs $h={104}>
        <Tab $shift={-2}>分时</Tab>
        <Tab $shift={-2}>五日</Tab>
        <Tab $on><Mixed>日K</Mixed></Tab>
        <Tab><Mixed>周K</Mixed></Tab>
        <Tab $shift={3}><Mixed>月K</Mixed></Tab>
        <Tab $shift={4}>更多<Corner width={13} height={14} viewBox="0 0 13 14"><path d="M13 0v14H0z" fill={C.gray} /></Corner></Tab>
        <Tab $shift={1}>
          <svg width={50} height={50} viewBox="-25 -25 50 50" fill="none" stroke={C.gray} strokeWidth={3} strokeLinejoin="round">
            <path d="M-7.3-21.500Q0-15.500 7.300-21.500L14.500-17.300Q15-8.500 23-4.500V4.500Q15 8.500 14.500 17.300L7.300 21.500Q0 15.500-7.300 21.500L-14.500 17.300Q-15 8.500-23 4.500V-4.500Q-15-8.500-14.500-17.300Z" />
            <circle r={8} />
          </svg>
        </Tab>
      </Tabs>
      <Rule />

      <MaBar>
        均线
        <MaGrid>
          <Ma $c={C.ink}>MA5:8.75</Ma>
          <Ma $c={C.yellow}>7:8.92</Ma>
          <Ma $c={C.magenta}>10:9.25</Ma>
          <Ma $c={C.green}>21:9.30</Ma>
          <Ma $c={C.gray}>30:9.16</Ma>
          <Ma $c={C.navy}>60:9.04</Ma>
          <Ma $c={C.sky}>120:8.84</Ma>
          <Ma $c={C.red}>250:9.06</Ma>
        </MaGrid>
        <SmallButton><Mixed>DK点</Mixed></SmallButton>
        <SmallButton>前复权</SmallButton>
      </MaBar>

      <PriceChart />

      <IndicatorHead h={58} name="成交量" items={["41059", "MA1:37908", "MA2:88222"]} ls={-0.05} />
      <Chart top={1354} height={179}>
        <Bars data={volume} y={midY} base={1531} />
        <Line data={volMa1} y={midY} c={C.yellow} />
        <Line data={volMa2} y={midY} c={C.magenta} />
        <text x={25} y={1385}>25.5<tspan dx={4}>万</tspan></text>
      </Chart>

      <IndicatorHead h={59} name="MACD" items={["DIF:-0.06", "DEA:0.08", "M:-0.29"]} ls={-0.35} />
      <Chart top={1592} height={177}>
        {hist.map((v, i) => (
          <path key={i} d={`M${px(i) + 1.5} ${midY(1105)}V${midY(v)}`} stroke={v < 1105 ? C.bar : C.green} strokeWidth={2.9} />
        ))}
        <Line data={dif} y={midY} c="#1f1f1f" />
        <Line data={dea} y={midY} c={C.yellow} />
        <text x={25} y={1620.5}>0.33</text>
        <text x={25} y={1761}>-0.29</text>
      </Chart>

      <IndicatorHead h={58} name="KDJ" items={["K:11.33", "D:17.62", "J:-1.24"]} ls={0.1} />
      <Chart top={1827} height={178}>
        <Line data={kLine} y={lowY} c="#1f1f1f" />
        <Line data={dLine} y={lowY} c={C.yellow} />
        <Line data={jLine} y={lowY} c={C.magenta} />
        <text x={25} y={1856.5}>107.30</text>
        <text x={25} y={1997}>-13.74</text>
      </Chart>

      <IndicatorHead h={58} name="成交额" items={["3579万", "MA1:3343万", "MA2:8607万"]} ls={-0.2} />
      <Chart top={2063} height={177}>
        <Bars data={amount} y={lowY} base={2239} />
        <Line data={amtMa1} y={lowY} c={C.yellow} />
        <Line data={amtMa2} y={lowY} c={C.magenta} />
        <text x={25} y={2093}>2.75<tspan dx={4}>亿</tspan></text>
      </Chart>
      <Dates>
        <DateLabel $ls={0.8}>20211216</DateLabel>
        <DateLabel $ls={0.3}>20220330</DateLabel>
      </Dates>
      <Rule $w={2} $inset={18} />

      <Promo>
        <svg width={48} height={40} viewBox="0 0 48 40" fill={C.orange}>
          <path d="M1 12h4v16H1zM9 12 37 3V1h8v38h-8v-2l-8-3c-2 3-7 4-10 1l-2-3-8-4z" />
        </svg>
        <PromoText>期货双向交易，可买涨，可买跌，涨跌都有投资机会！</PromoText>
        <Bar />
        <Cross size={25} c={C.orange} w={2.4} />
      </Promo>
      <Rule />

      <Tabs $h={104} $pad="0 11px 0 7px">
        <Tab $on>股吧</Tab>
        <Tab>盘口</Tab>
        <Tab>资讯</Tab>
        <Tab>公告</Tab>
        <Tab>研报</Tab>
        <Tab>财务</Tab>
        <Tab>资料</Tab>
      </Tabs>
      <Rule $inset={9} $gap={4} />
      <Rule $w={2} />

      <Bottom>
        <BottomRow>
          <Board>
            <svg width={22} height={11} viewBox="0 0 22 11"><path d="M11 0 22 11H0z" fill={C.gray} /></svg>
            <BoardIndex>940.38</BoardIndex>
            <BoardRow>消费电子<BoardPct>1.97%</BoardPct></BoardRow>
          </Board>
          <Action>
            <svg width={70} height={64} viewBox="-35 -32 70 64" fill="none" stroke={C.gray} strokeWidth={2.8} strokeLinecap="round" strokeLinejoin="round">
              <path d="M-16-22.500A28 28 0 0 1 24 14.300L32 10.500M17.700 22A28 28 0 0 1-23.300-13.500L-32-10.500" />
              <path d="M-9-12.500 0-3.500 9-12.500M0-3.500V15M-10.500-2.500h21M-10.500 6.500h21" strokeLinecap="butt" />
            </svg>
            交易
          </Action>
          <Action>
            <svg width={64} height={64} viewBox="-32 -32 64 64" fill="none" stroke={C.gray} strokeWidth={2.8}>
              <path d="M12-25.500H-18Q-26-25.500-26-17.500V18Q-26 26-18 26H18Q26 26 26 18V-11" />
              <path d="M-8.500 10-6 2 15-18 19-14-2 6Z" fill={C.gray} stroke="none" />
              <path d="M20-20 23-23" strokeWidth={6.5} strokeLinecap="round" />
            </svg>
            发帖
          </Action>
          <Action>
            <svg width={64} height={64} viewBox="-32 -32 64 64" fill="none" stroke={C.gray} strokeWidth={2.8}>
              <rect x={-24} y={-24} width={22} height={22} rx={4} />
              <rect x={-24} y={4} width={22} height={22} rx={4} />
              <rect x={4} y={4} width={22} height={22} rx={4} />
              <rect x={6} y={-21.5} width={17.5} height={17.5} rx={3} transform="rotate(45 14.7 -12.7)" />
            </svg>
            功能
          </Action>
          <Action $on>
            <svg width={64} height={64} viewBox="-32 -32 64 64" fill="none" stroke={C.orange} strokeWidth={2.8}>
              <circle r={27} />
              <path d="M-13.500 0h27M0-13.500v27" />
            </svg>
            加自选
          </Action>
        </BottomRow>
        <HomeBar />
      </Bottom>

      <Push>
        <PushHead>
          <svg width={60} height={60} viewBox="0 0 60 60">
            <defs>
              <linearGradient id="app" x1="0" y1="0" x2="0" y2="1">
                <stop offset="0" stopColor="#f0653a" />
                <stop offset="0.5" stopColor="#e93a2a" />
                <stop offset="1" stopColor="#d42a1e" />
              </linearGradient>
              <clipPath id="appClip"><rect width={60} height={60} rx={13.5} /></clipPath>
            </defs>
            <g clipPath="url(#appClip)">
              <rect width={60} height={60} fill="url(#app)" />
              <path d="M60 35V60H39Z" fill="#3f74e6" />
              <path d="M44.500 22.500C43 8.500 15 7 15 29.500S43 51 44.500 37" fill="none" stroke="#fff" strokeWidth={9.5} />
              <path d="M47 55 57 43" stroke="#bcd2ff" strokeWidth={3.5} strokeDasharray="2 1" />
            </g>
          </svg>
          <AppName>财联社</AppName>
          <When>现在</When>
        </PushHead>
        <PushBody>
          <PushLine $ls={-0.14}>【生态环境部：今年将开展打击碳排放数据弄虚作假等专</PushLine>
          <PushLine $ls={-0.05}>项行动】财联社<Gap />3月30日电，生态环境部新闻发言人刘...</PushLine>
        </PushBody>
      </Push>
    </Page>
  );
}
